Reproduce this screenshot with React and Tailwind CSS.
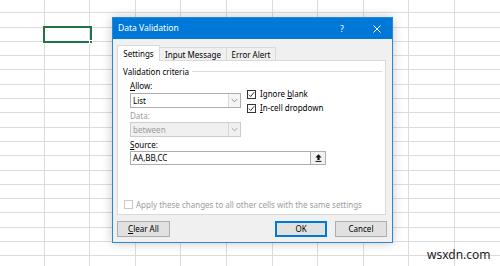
import React from 'react';

const COLS = 12;
const ROWS = 19;
const FONT = { fontFamily: '"Noto Sans", "Open Sans", sans-serif' };

function Sheet() {
  const cells = [];
  for (let r = 0; r < ROWS; r++) {
    for (let c = 0; c < COLS; c++) {
      cells.push(<div key={`${r}-${c}`} className="border-r border-b border-[#dcdcdc]" />);
    }
  }
  return (
    <div className="grid grid-cols-[repeat(12,45.6px)] auto-rows-[14.3px] ml-[-1px] mt-[-1px]">
      {cells}
    </div>
  );
}

function Check({ disabled }) {
  return (
    <span className={`w-[9px] h-[9px] shrink-0 border bg-white flex items-center justify-center ${disabled ? 'border-[#c8c8c8]' : 'border-[#333]'}`}>
      {!disabled && (
        <svg width="7" height="7" viewBox="0 0 7 7">
          <path d="M0.8 3.6 L2.7 5.5 L6.2 1.2" fill="none" stroke="#222" strokeWidth="0.9" />
        </svg>
      )}
    </span>
  );
}

function Chevron({ color = '#777' }) {
  return (
    <svg width="7" height="5" viewBox="0 0 7 5">
      <path d="M0.7 1 L3.5 3.8 L6.3 1" fill="none" stroke={color} strokeWidth="0.9" />
    </svg>
  );
}

function Select({ value, disabled }) {
  return (
    <div className={`w-[111px] h-[15px] flex border ${disabled ? 'border-[#cccccc] bg-[#f0f0f0]' : 'border-[#adadad] bg-white'}`}>
      <span className={`flex-1 pl-[2px] leading-[13px] ${disabled ? 'text-[#9d9d9d]' : 'text-black'}`}>{value}</span>
      <span className={`w-[12px] flex items-center justify-center border-l ${disabled ? 'border-[#d6d6d6] bg-[#f0f0f0]' : 'border-[#dadada] bg-[#f5f5f5]'}`}>
        <Chevron color={disabled ? '#9a9a9a' : '#888'} />
      </span>
    </div>
  );
}

function Button({ children, primary, w = 'w-[52px]' }) {
  return (
    <div className={`${w} h-[16px] flex items-center justify-center bg-[#e1e1e1] ${primary ? 'border-2 border-[#0078d7]' : 'border border-[#adadad]'}`}>
      {children}
    </div>
  );
}

export default function App() {
  return (
    <div className="relative w-[500px] h-[266px] overflow-hidden bg-white text-[8px] text-black" style={FONT}>
      <Sheet />

      {/* selected cell */}
      <div className="absolute left-[43px] top-[26px] w-[49px] h-[17px] border-2 border-[#217346]" />
      <div className="absolute left-[89px] top-[40px] w-[4px] h-[4px] bg-[#217346] border border-white" />

      {/* dialog */}
      <div className="absolute left-[112px] top-[17px] w-[281px] h-[226px] flex flex-col bg-[#f0f0f0] border border-[#2b87d3] shadow-[0_0_10px_rgba(0,0,0,0.22)]">
        <div className="h-[21px] shrink-0 flex items-center bg-[#0078d7] text-white pl-[5px] pr-[11px]">
          <span className="flex-1 text-[8.5px]">Data Validation</span>
          <span className="text-[9px] mr-[29px]">?</span>
          <svg width="8" height="8" viewBox="0 0 8 8">
            <path d="M0.5 0.5 L7.5 7.5 M7.5 0.5 L0.5 7.5" stroke="#fff" strokeWidth="1" />
          </svg>
        </div>

        <div className="flex flex-col px-[4px] pt-[6px]">
          <div className="flex items-end h-[16px]">
            <div className="w-[43px] h-[16px] bg-white border border-b-0 border-[#d9d9d9] flex items-center justify-center relative z-10">Settings</div>
            <div className="w-[67px] h-[14px] border border-l-0 border-b-0 border-[#d9d9d9] flex items-center justify-center">Input Message</div>
            <div className="w-[49px] h-[14px] border border-l-0 border-b-0 border-[#d9d9d9] flex items-center justify-center">Error Alert</div>
          </div>

          <div className="w-[269px] h-[155px] bg-white border border-[#d9d9d9] -mt-px pl-[5px] pr-[3px] pt-[5px] flex flex-col">
            <div className="h-[11px] flex items-center">
              <span className="leading-[11px]">Validation criteria</span>
              <span className="flex-1 h-px bg-[#dcdcdc] ml-[3px]" />
            </div>

            <div className="flex ml-[7px]">
              <div className="flex flex-col">
                <span className="mt-[3px] h-[11px] leading-[11px]"><u className="underline-offset-1">A</u>llow:</span>
                <div className="mt-[2px]"><Select value="List" /></div>
                <span className="mt-[2px] h-[11px] leading-[11px] text-[#9d9d9d]">Data:</span>
                <div className="mt-px"><Select value="between" disabled /></div>
              </div>
              <div className="flex flex-col pt-[10px] ml-[6px]">
                <div className="h-[14px] flex items-center gap-[4px]">
                  <Check />
                  <span>Ignore <u className="underline-offset-1">b</u>lank</span>
                </div>
                <div className="h-[14px] flex items-center gap-[4px]">
                  <Check />
                  <span><u className="underline-offset-1">I</u>n-cell dropdown</span>
                </div>
              </div>
            </div>

            <span className="ml-[7px] mt-[2px] h-[11px] leading-[11px]"><u className="underline-offset-1">S</u>ource:</span>
            <div className="ml-[7px] mt-px w-[196px] h-[14px] flex border border-[#adadad]">
              <span className="flex-1 pl-[2px] leading-[12px]">AA,BB,CC</span>
              <span className="w-[15px] flex items-center justify-center border-l border-[#adadad] bg-[#f3f3f3]">
                <svg width="7" height="8" viewBox="0 0 7 8">
                  <path d="M3.5 0.3 L6.6 3.6 L4.6 3.6 L4.6 6 L2.4 6 L2.4 3.6 L0.4 3.6 Z" fill="#111" />
                  <rect x="0.6" y="6.9" width="5.8" height="1" fill="#111" />
                </svg>
              </span>
            </div>

            <div className="mt-[34px] ml-px h-[11px] flex items-center gap-[3px] text-[#9d9d9d]">
              <Check disabled />
              <span>Apply these changes to all other cells with the same settings</span>
            </div>
          </div>

          <div className="flex items-center mt-[6px]">
            <Button w="w-[53px]"><span><u className="underline-offset-1">C</u>lear All</span></Button>
            <span className="flex-1" />
            <Button primary>OK</Button>
            <span className="w-[8px]" />
            <Button>Cancel</Button>
            <span className="w-[1px]" />
          </div>
        </div>
      </div>

      <span className="absolute left-[427px] top-[247px] text-[12px] text-[#222] leading-[16px]">wsxdn.com</span>
    </div>
  );
}
